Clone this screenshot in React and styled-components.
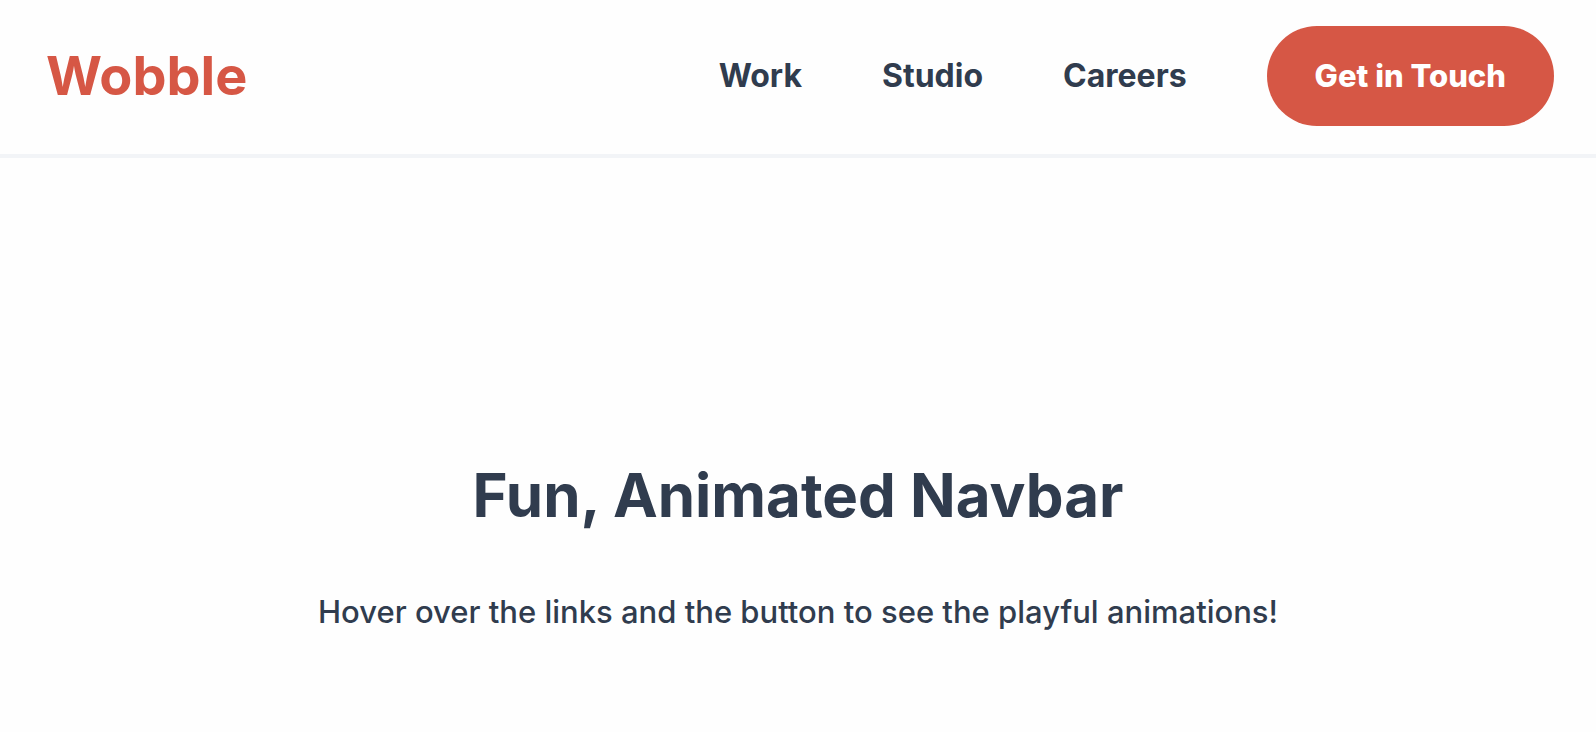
import styled, { createGlobalStyle } from "styled-components";

const GlobalStyle = createGlobalStyle`
  * {
    box-sizing: border-box;
  }

  body {
    margin: 0;
    background: #fefefe;
    color: #303c4e;
    font-family: Inter, "Liberation Sans", sans-serif;
  }
`;

const Navbar = styled.nav`
  display: flex;
  align-items: center;
  justify-content: space-between;
  flex-wrap: wrap;
  padding: 26px 42px 28px 46px;
  background: #fefefe;
  border-bottom: 4px solid #f2f4f7;
`;

const Logo = styled.a`
  color: #d65745;
  font-size: 54px;
  font-weight: 700;
  line-height: 64px;
  text-decoration: none;
`;

const NavLinks = styled.ul`
  display: flex;
  align-items: center;
  flex-wrap: wrap;
  gap: 80px;
  margin: 0;
  padding: 0;
  list-style: none;

  @media (max-width: 768px) {
    gap: 24px;
  }
`;

const NavLink = styled.a`
  display: inline-block;
  color: #303c4e;
  font-size: 32px;
  font-weight: 650;
  line-height: 40px;
  text-decoration: none;
  transition: transform 0.3s ease;

  &:hover {
    transform: translateY(-4px) rotate(-3deg);
  }
`;

const ContactButton = styled.button`
  padding: 30px 48px;
  border: none;
  border-radius: 50px;
  background: #d65745;
  color: #ffffff;
  font-family: inherit;
  font-size: 31px;
  font-weight: 800;
  line-height: 40px;
  cursor: pointer;
  transition: transform 0.3s ease;

  &:hover {
    transform: scale(1.05);
  }
`;

const Content = styled.main`
  padding: 300px 32px 96px;
  text-align: center;
`;

const Title = styled.h1`
  margin: 0 0 60px;
  font-size: 60px;
  font-weight: 750;
  line-height: 74px;
`;

const Description = styled.p`
  margin: 0;
  font-size: 31px;
  font-weight: 500;
  line-height: 40px;
`;

const links = ["Work", "Studio", "Careers"];

function App() {
  return (
    <>
      <GlobalStyle />
      <Navbar>
        <Logo href="#">Wobble</Logo>
        <NavLinks>
          {links.map((link) => (
            <li key={link}>
              <NavLink href={`#${link.toLowerCase()}`}>{link}</NavLink>
            </li>
          ))}
          <li>
            <ContactButton type="button">Get in Touch</ContactButton>
          </li>
        </NavLinks>
      </Navbar>
      <Content>
        <Title>Fun, Animated Navbar</Title>
        <Description>
          Hover over the links and the button to see the playful animations!
        </Description>
      </Content>
    </>
  );
}

export default App;
